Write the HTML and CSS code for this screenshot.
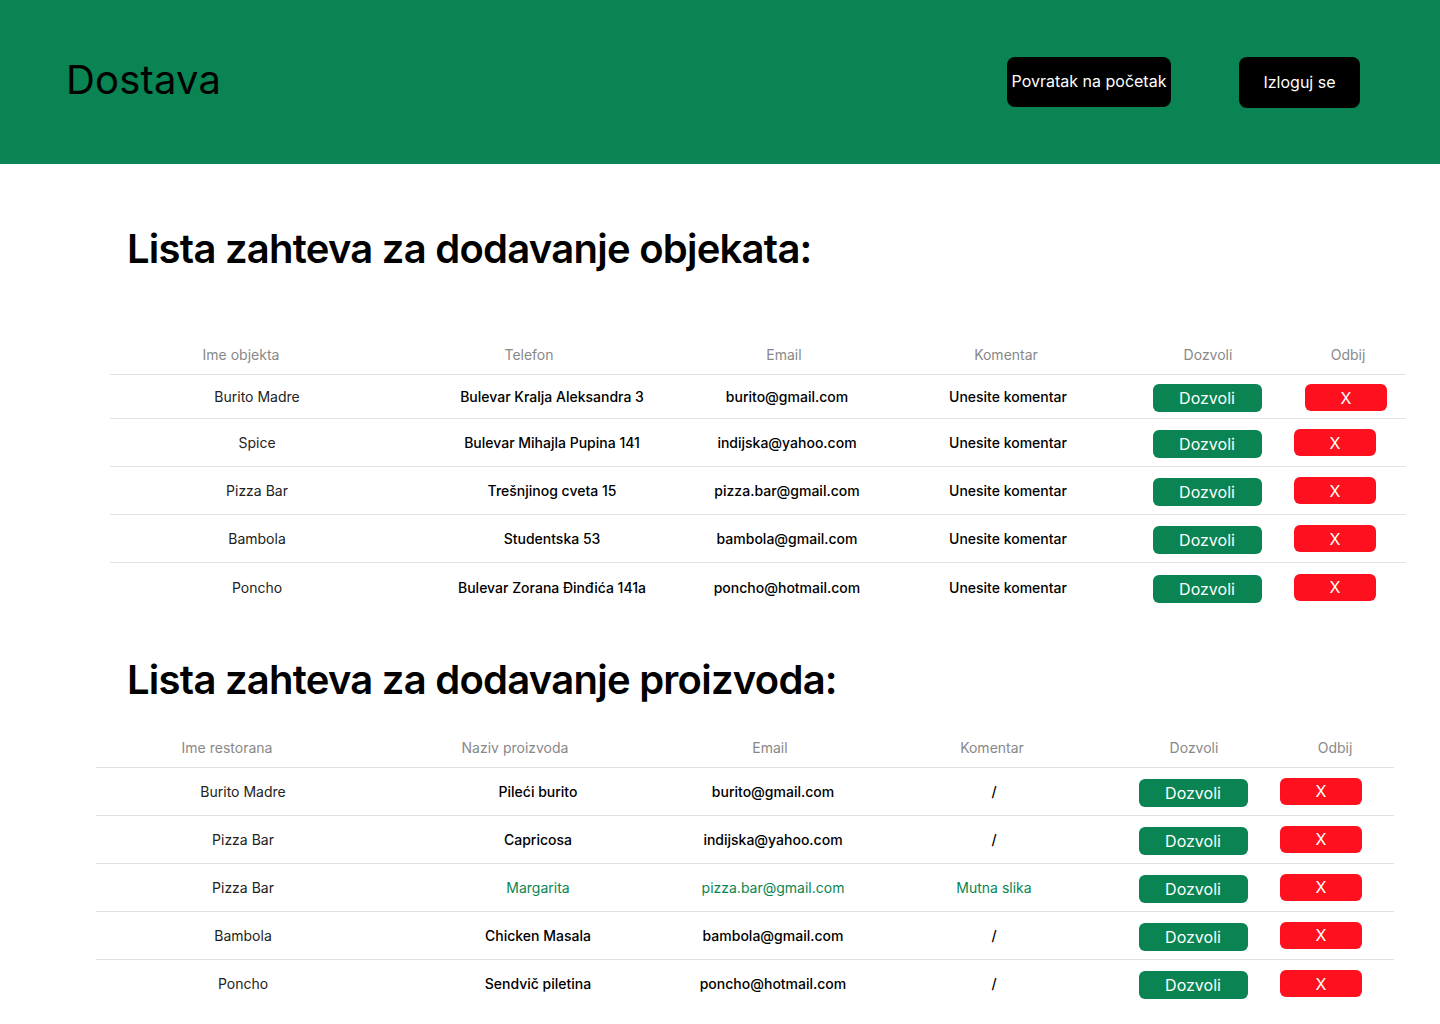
FILE: index.html
```html
<!DOCTYPE html>
<html lang="sr">
<head>
<meta charset="utf-8">
<title>Dostava</title>
<link rel="stylesheet" href="styles.css">
</head>
<body>
<header class="topbar">
  <div class="brand">Dostava</div>
  <nav class="top-actions">
    <button class="top-btn top-btn--home">Povratak na početak</button>
    <button class="top-btn top-btn--logout">Izloguj se</button>
  </nav>
</header>

<main class="content">
  <h1 class="section-title section-title--first">Lista zahteva za dodavanje objekata:</h1>
  <div class="req-table req-table--objects">
    <div class="req-row req-row--head">
      <div class="cell head h1">Ime objekta</div>
      <div class="cell head h2">Telefon</div>
      <div class="cell head h3">Email</div>
      <div class="cell head h4">Komentar</div>
      <div class="cell head h5">Dozvoli</div>
      <div class="cell head h6">Odbij</div>
    </div>
    <div class="req-row req-row--first">
      <div class="cell name">Burito Madre</div>
      <div class="cell">Bulevar Kralja Aleksandra 3</div>
      <div class="cell">burito@gmail.com</div>
      <div class="cell">Unesite komentar</div>
      <div class="cell"><button class="btn-allow">Dozvoli</button></div>
      <div class="cell reject"><button class="btn-reject btn-reject--shift">X</button></div>
    </div>
    <div class="req-row">
      <div class="cell name">Spice</div>
      <div class="cell">Bulevar Mihajla Pupina 141</div>
      <div class="cell">indijska@yahoo.com</div>
      <div class="cell">Unesite komentar</div>
      <div class="cell"><button class="btn-allow">Dozvoli</button></div>
      <div class="cell reject"><button class="btn-reject">X</button></div>
    </div>
    <div class="req-row">
      <div class="cell name">Pizza Bar</div>
      <div class="cell">Trešnjinog cveta 15</div>
      <div class="cell">pizza.bar@gmail.com</div>
      <div class="cell">Unesite komentar</div>
      <div class="cell"><button class="btn-allow">Dozvoli</button></div>
      <div class="cell reject"><button class="btn-reject">X</button></div>
    </div>
    <div class="req-row">
      <div class="cell name">Bambola</div>
      <div class="cell">Studentska 53</div>
      <div class="cell">bambola@gmail.com</div>
      <div class="cell">Unesite komentar</div>
      <div class="cell"><button class="btn-allow">Dozvoli</button></div>
      <div class="cell reject"><button class="btn-reject">X</button></div>
    </div>
    <div class="req-row req-row--last">
      <div class="cell name">Poncho</div>
      <div class="cell">Bulevar Zorana Đinđića 141a</div>
      <div class="cell">poncho@hotmail.com</div>
      <div class="cell">Unesite komentar</div>
      <div class="cell"><button class="btn-allow">Dozvoli</button></div>
      <div class="cell reject"><button class="btn-reject">X</button></div>
    </div>
  </div>

  <h1 class="section-title section-title--second">Lista zahteva za dodavanje proizvoda:</h1>
  <div class="req-table req-table--products">
    <div class="req-row req-row--head">
      <div class="cell head h1">Ime restorana</div>
      <div class="cell head h2">Naziv proizvoda</div>
      <div class="cell head h3">Email</div>
      <div class="cell head h4">Komentar</div>
      <div class="cell head h5">Dozvoli</div>
      <div class="cell head h6">Odbij</div>
    </div>
    <div class="req-row">
      <div class="cell name">Burito Madre</div>
      <div class="cell">Pileći burito</div>
      <div class="cell">burito@gmail.com</div>
      <div class="cell">/</div>
      <div class="cell"><button class="btn-allow">Dozvoli</button></div>
      <div class="cell reject"><button class="btn-reject">X</button></div>
    </div>
    <div class="req-row">
      <div class="cell name">Pizza Bar</div>
      <div class="cell">Capricosa</div>
      <div class="cell">indijska@yahoo.com</div>
      <div class="cell">/</div>
      <div class="cell"><button class="btn-allow">Dozvoli</button></div>
      <div class="cell reject"><button class="btn-reject">X</button></div>
    </div>
    <div class="req-row req-row--flagged">
      <div class="cell name">Pizza Bar</div>
      <div class="cell">Margarita</div>
      <div class="cell">pizza.bar@gmail.com</div>
      <div class="cell">Mutna slika</div>
      <div class="cell"><button class="btn-allow">Dozvoli</button></div>
      <div class="cell reject"><button class="btn-reject">X</button></div>
    </div>
    <div class="req-row">
      <div class="cell name">Bambola</div>
      <div class="cell">Chicken Masala</div>
      <div class="cell">bambola@gmail.com</div>
      <div class="cell">/</div>
      <div class="cell"><button class="btn-allow">Dozvoli</button></div>
      <div class="cell reject"><button class="btn-reject">X</button></div>
    </div>
    <div class="req-row req-row--last">
      <div class="cell name">Poncho</div>
      <div class="cell">Sendvič piletina</div>
      <div class="cell">poncho@hotmail.com</div>
      <div class="cell">/</div>
      <div class="cell"><button class="btn-allow">Dozvoli</button></div>
      <div class="cell reject"><button class="btn-reject">X</button></div>
    </div>
  </div>
</main>
</body>
</html>
```

FILE: styles.css
```css
* { box-sizing: border-box; }

html, body {
  margin: 0;
  padding: 0;
  background: #ffffff;
  font-family: Inter, "Noto Sans", "Liberation Sans", sans-serif;
  color: #000;
}

.topbar {
  height: 164px;
  background: #098452;
  display: flex;
  align-items: center;
  justify-content: space-between;
  padding: 0 80px 0 66px;
}

.brand {
  font-size: 40px;
  font-weight: 400;
  color: #000;
  line-height: 1.21;
  margin-top: -4px;
  letter-spacing: 0.2px;
}

.top-actions {
  display: flex;
  align-items: center;
  gap: 68px;
}

.top-btn {
  background: #000;
  color: #fff;
  border: none;
  border-radius: 8px;
  font-family: Inter, "Noto Sans", sans-serif;
  font-size: 16px;
  font-weight: 400;
  height: 50px;
  padding: 0;
}

.top-btn--home { width: 164px; padding-bottom: 3px; }
.top-btn--logout { width: 121px; height: 51px; }

.content {
  padding-bottom: 20px;
}

.section-title {
  margin: 0;
  font-size: 40px;
  font-weight: 600;
  line-height: 1.21;
  letter-spacing: -0.75px;
  padding-left: 127px;
}

.section-title--first { margin-top: 61px; }
.section-title--second { margin-top: 45px; }

.req-table {
  display: flex;
  flex-direction: column;
}

.req-table--objects { width: 1296px; margin-left: 110px; margin-top: 62px; }
.req-table--products { width: 1298px; margin-left: 96px; margin-top: 23px; }

.req-row {
  display: grid;
  grid-template-columns: 294px 296px 174px 268px 130px 1fr;
  align-items: center;
  height: 48px;
  border-bottom: 1px solid #e2e2e2;
  font-size: 14px;
  font-weight: 500;
  color: #000;
}

.req-row--head {
  height: 40px;
  font-weight: 400;
  color: #888;
}

.req-row--first { height: 44px; }
.req-row--last { border-bottom: none; }

.cell {
  text-align: center;
  white-space: nowrap;
  display: flex;
  justify-content: center;
  align-items: center;
}

.cell.name {
  font-weight: 400;
  color: #222;
}

.head.h1 { padding-right: 32px; }
.head.h2 { padding-right: 46px; }
.head.h3 { padding-right: 6px; }
.head.h4 { padding-right: 4px; }
.head.h5 { padding-left: 2px; }
.head.h6 { padding-left: 18px; }

.cell.reject {
  justify-content: flex-start;
  padding-left: 22px;
}

.req-row--flagged .cell:not(.name):not(:nth-child(5)):not(:nth-child(6)) {
  color: #0a8552;
  font-weight: 400;
}

.btn-allow {
  width: 109px;
  height: 28px;
  border: none;
  border-radius: 6px;
  background: #098452;
  color: #fff;
  font-family: Inter, "Noto Sans", sans-serif;
  font-size: 16px;
  font-weight: 400;
  padding: 0;
  margin-top: 3px;
}

.btn-reject {
  width: 82px;
  height: 27px;
  border: none;
  border-radius: 6px;
  background: #ff101f;
  color: #fff;
  font-family: Inter, "Noto Sans", sans-serif;
  font-size: 16px;
  font-weight: 400;
  padding: 0;
}

.btn-reject--shift { margin-left: 11px; margin-top: 2px; }
```
